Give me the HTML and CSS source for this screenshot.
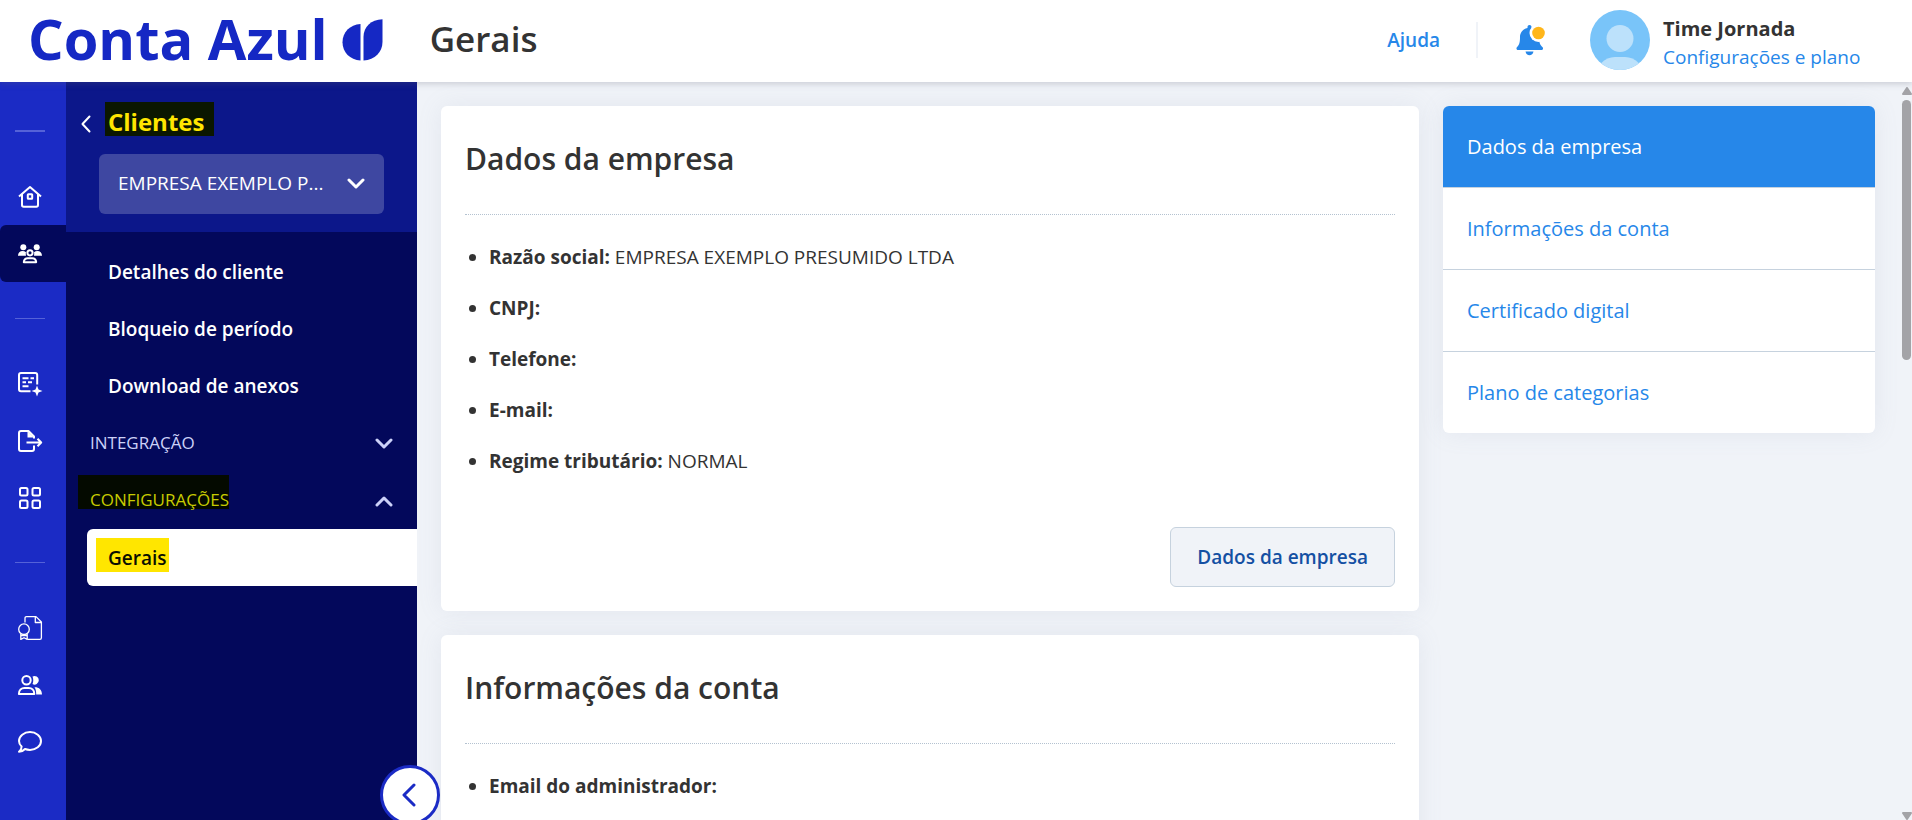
FILE: index.html
```html
<!DOCTYPE html>
<html lang="pt-BR">
  <head>
    <meta charset="utf-8">
    <meta name="viewport" content="width=device-width, initial-scale=1">
    <title>Gerais - Conta Azul</title>
    <link rel="stylesheet" href="styles.css">
  </head>

  <body>
    <header class="topbar">
      <a class="logo" href="#">
        <span class="logo-text">Conta Azul</span>
        <svg class="logo-mark" width="42" height="42" viewBox="0 0 42 42" aria-hidden="true">
          <path d="M18.500 5v36.500C8 41 .5 33 .5 23.200S8 5.500 18.500 5z"/>
          <path d="M21.500 41.500V18C21.500 8 29 .5 40.500.3V23C40.500 33 33 41 21.500 41.500z"/>
        </svg>
      </a>
      <h1 class="page-title">Gerais</h1>
      <div class="topbar-right">
        <a class="help" href="#">Ajuda</a>
        <button class="bell" type="button" aria-label="Notificações">
          <svg width="30" height="32" viewBox="0 0 30 32" aria-hidden="true">
            <path fill="#2687e9" d="M13.500 1c1.200 0 2 .9 2 2v1C20 5 23 8.500 23 13c0 5 .8 7.500 3.600 10.300.9 1 .4 2.700-1.100 2.700H2c-1.500 0-2-1.700-1.100-2.700C3.500 20.500 4 18 4 13c0-4.500 3-8 7.500-9V3c0-1.100.8-2 2-2z"/>
            <path fill="#2687e9" d="M9.500 27.500h8c-.5 2.500-2 3.700-4 3.700s-3.500-1.200-4-3.700z"/>
            <circle cx="22.500" cy="9" r="9" fill="#fff"/>
            <circle cx="22.500" cy="9" r="6.300" fill="#ffb61a"/>
          </svg>
        </button>
        <div class="user">
          <svg class="avatar" width="60" height="60" viewBox="0 0 60 60" aria-hidden="true">
            <circle cx="30" cy="30" r="30" fill="#79c4f9"/>
            <circle cx="30" cy="28.500" r="13.500" fill="#bce1fb"/>
            <path fill="#bce1fb" d="M11 53.200C15 49 20 47 25 47h10c5 0 10 2 14 6.200A30 30 0 0 1 11 53.200z"/>
          </svg>
          <div class="user-text">
            <strong>Time Jornada</strong>
            <a href="#">Configurações e plano</a>
          </div>
        </div>
      </div>
    </header>

    <div class="layout">
      <nav class="rail" aria-label="Principal">
        <hr>
        <a href="#" aria-label="Início">
          <svg viewBox="0 0 24 24"><path d="M1 11.500 12 2l11 9.500M4 9.500V20c0 1 .6 1.700 1.700 1.700h12.600c1.100 0 1.700-.7 1.700-1.700V9.500"/><rect x="9.800" y="9.300" width="4.400" height="4.400" rx=".5"/></svg>
        </a>
        <a class="active" href="#" aria-label="Clientes">
          <svg viewBox="0 0 24 24"><g class="solid"><circle cx="5.300" cy="5.200" r="3"/><circle cx="18.700" cy="5.200" r="3"/><path d="M0 13.800c0-3 2-4.800 4.500-4.800 1.300 0 2.500.4 3.500 1.200-.4 1.200-.3 2.400.1 3.600zM24 13.800c0-3-2-4.800-4.500-4.800-1.300 0-2.500.4-3.500 1.200.4 1.200.3 2.400-.1 3.600z"/></g><circle cx="12" cy="10.800" r="2.600"/><path d="M5.800 20.200c.2-2.600 1.800-4 4-4h4.400c2.200 0 3.800 1.400 4 4z"/></svg>
        </a>
        <hr>
        <a href="#" aria-label="Lançamentos">
          <svg viewBox="0 0 24 24"><path d="M12.500 19.200H3c-1.200 0-2-.8-2-2V3c0-1.200.8-2 2-2h14.200c1.200 0 2 .8 2 2v9.500M4.500 6.200h6M12.500 6.200H16M4.500 10.200H8M10 10.200h4M4.500 14.200h6"/><path class="solid" d="M19 13.500l1.500 4L24.500 19l-4 1.500L19 24.500l-1.500-4-4-1.500 4-1.500z"/></svg>
        </a>
        <a href="#" aria-label="Exportar">
          <svg viewBox="0 0 24 24"><path d="M16 16.500V20c0 1.200-.8 2-2 2H3c-1.200 0-2-.8-2-2V4c0-1.200.8-2 2-2h7.500L16 7.500v2M8.500 13.500H23M19.500 9.800l3.700 3.700-3.700 3.700"/><path class="solid" d="M9.500 2v6.500H16z"/></svg>
        </a>
        <a href="#" aria-label="Aplicativos">
          <svg viewBox="0 0 24 24"><rect x="2" y="2" width="7.500" height="7.500" rx="1.500"/><rect x="14.500" y="2" width="7.500" height="7.500" rx="1.500"/><rect x="2" y="14.500" width="7.500" height="7.500" rx="1.500"/><rect x="14.500" y="14.500" width="7.500" height="7.500" rx="1.500"/></svg>
        </a>
        <hr>
        <a href="#" aria-label="Certificados">
          <svg class="thin" viewBox="0 0 24 24"><path d="M7 6.500V2.200C7 1.200 7.600.6 8.500.6H18l5.400 5.400v15.800c0 1-.6 1.600-1.600 1.600H9.500M17.300.8v5.700h6"/><circle cx="6" cy="13.200" r="5.300"/><path d="M2.800 17.800v5.600L6 21.700l3.200 1.700v-5.600M3 19.500h6"/></svg>
        </a>
        <a href="#" aria-label="Usuários">
          <svg viewBox="0 0 24 24"><g class="solid"><path d="M14.500 3.500a4.300 4.300 0 1 1 0 7.600c1-2.200 1-5.400 0-7.600zM16.500 14.200c4.500-.2 7.500 2.500 7.500 7.300h-5.800c0-3-.3-5.200-1.700-7.300z"/></g><circle cx="8.500" cy="7.200" r="4.200"/><path d="M.9 20.900c0-4 2.600-6 5.600-6h4.200c3 0 5.600 2 5.600 6z"/></svg>
        </a>
        <a href="#" aria-label="Mensagens">
          <svg viewBox="0 0 24 24"><path d="M3.600 16.500C2 15 1 13 1 11c0-5 5-8.900 11-8.900S23 6 23 11s-5 8.900-11 8.900c-1.800 0-3.500-.3-5-.9-1.500 1.700-3.500 2.700-6 2.700 1.800-1.500 2.700-3.300 2.600-5.200z"/></svg>
        </a>
      </nav>

      <aside class="sidebar">
        <div class="sidebar-head">
          <div class="sidebar-title">
            <a href="#" aria-label="Voltar"><svg class="chevron" width="10" height="18" viewBox="0 0 10 18"><path d="M8.500 1.500 1.500 9l7 7.500"/></svg></a>
            <h2><mark class="dark">Clientes</mark></h2>
          </div>
          <div class="company">
            <select aria-label="Empresa">
              <option>EMPRESA EXEMPLO P...</option>
            </select>
            <svg class="chevron bold" width="18" height="12" viewBox="0 0 18 12" aria-hidden="true"><path d="M2 2l7 7 7-7"/></svg>
          </div>
        </div>
        <nav class="menu" aria-label="Clientes">
          <a class="item" href="#">Detalhes do cliente</a>
          <a class="item" href="#">Bloqueio de período</a>
          <a class="item" href="#">Download de anexos</a>
          <button class="group" type="button" aria-expanded="false">
            <span>INTEGRAÇÃO</span>
            <svg class="chevron bold" width="18" height="12" viewBox="0 0 18 12"><path d="M2 2l7 7 7-7"/></svg>
          </button>
          <button class="group" type="button" aria-expanded="true">
            <mark class="dark">CONFIGURAÇÕES</mark>
            <svg class="chevron bold" width="18" height="12" viewBox="0 0 18 12"><path d="M2 10l7-7 7 7"/></svg>
          </button>
          <a class="item current" href="#"><mark>Gerais</mark></a>
        </nav>
        <button class="collapse" type="button" aria-label="Recolher menu">
          <svg class="chevron bold" width="14" height="24" viewBox="0 0 14 24"><path d="M12 2 2 12l10 10"/></svg>
        </button>
      </aside>

      <main class="content">
        <div class="cards">
          <section class="card">
            <h2>Dados da empresa</h2>
            <ul>
              <li><strong>Razão social:</strong> EMPRESA EXEMPLO PRESUMIDO LTDA</li>
              <li><strong>CNPJ:</strong></li>
              <li><strong>Telefone:</strong></li>
              <li><strong>E-mail:</strong></li>
              <li><strong>Regime tributário:</strong> NORMAL</li>
            </ul>
            <div class="card-actions">
              <button class="btn" type="button">Dados da empresa</button>
            </div>
          </section>
          <section class="card">
            <h2>Informações da conta</h2>
            <ul>
              <li><strong>Email do administrador:</strong></li>
            </ul>
          </section>
        </div>
        <nav class="anchors" aria-label="Seções">
          <a class="active" href="#">Dados da empresa</a>
          <a href="#">Informações da conta</a>
          <a href="#">Certificado digital</a>
          <a href="#">Plano de categorias</a>
        </nav>
      </main>

      <div class="scrollbar" aria-hidden="true">
        <svg width="10" height="8" viewBox="0 0 10 8"><path d="M5 1 9 7H1z"/></svg>
        <span class="thumb"></span>
        <svg width="10" height="8" viewBox="0 0 10 8"><path d="M1 1h8L5 7z"/></svg>
      </div>
    </div>
  </body>
</html>
```

FILE: styles.css
```css
* {
  box-sizing: border-box;
}

body {
  margin: 0;
  height: 100vh;
  display: flex;
  flex-direction: column;
  overflow: hidden;
  background: #f0f3f8;
  color: #333;
  font-family: "Open Sans", "Noto Sans", sans-serif;
  font-size: 19px;
  line-height: 27px;
}

a {
  color: #2687e9;
  text-decoration: none;
}

button, select {
  font: inherit;
  border: 0;
  padding: 0;
  margin: 0;
  background: none;
  cursor: pointer;
}

h1, h2 {
  margin: 0;
  font-weight: 600;
}

svg {
  display: block;
  flex: none;
}

/* top bar */
.topbar {
  position: relative;
  z-index: 2;
  flex: none;
  display: flex;
  align-items: center;
  height: 82px;
  padding: 0 46px 2px 28px;
  background: #fff;
  box-shadow: 0 2px 6px rgba(90, 90, 110, .25);
}

.logo {
  display: flex;
  align-items: center;
  gap: 14px;
  color: #1528c4;
}

.logo-text {
  padding-bottom: 4px;
  font-size: 56px;
  line-height: 72px;
  font-weight: 700;
}

.logo-mark {
  fill: #1528c4;
}

.page-title {
  margin-left: 46px;
  padding-bottom: 2px;
  font-size: 35px;
  line-height: 48px;
}

.topbar-right {
  display: flex;
  align-items: center;
  margin-left: auto;
}

.help {
  padding-right: 36px;
  border-right: 2px solid #f0f3f8;
  line-height: 36px;
  font-weight: 600;
}

.bell {
  margin: 0 44px 0 38px;
}

.user {
  display: flex;
  align-items: center;
  gap: 13px;
}

.user-text {
  display: flex;
  flex-direction: column;
  min-width: 203px;
  padding-top: 6px;
  line-height: 29px;
}

.user-text strong {
  font-size: 20px;
}

.layout {
  position: relative;
  flex: 1;
  min-height: 0;
  display: flex;
}

/* icon rail */
.rail {
  flex: none;
  width: 66px;
  padding-top: 12px;
  background: #1b2bc5;
}

.rail hr {
  width: 30px;
  height: 1px;
  margin: 36px 0 36px 15px;
  border: 0;
  background: #5562d8;
}

.rail hr:first-child {
  height: 2px;
}

.rail a {
  display: flex;
  align-items: center;
  height: 57px;
  padding-left: 18px;
  border-radius: 6px 0 0 6px;
}

.rail a.active {
  background: #03085b;
}

.rail svg {
  width: 24px;
  height: 24px;
  fill: none;
  stroke: #fff;
  stroke-width: 2;
  stroke-linejoin: round;
  overflow: visible;
}

.rail svg.thin {
  stroke-width: 1.3;
}

.rail .solid {
  fill: #fff;
  stroke: none;
}

/* sidebar */
.sidebar {
  position: relative;
  z-index: 1;
  flex: none;
  width: 351px;
  background: #03085b;
}

.sidebar-head {
  height: 150px;
  padding: 20px 33px 0 15px;
  background: #0c178a;
}

.sidebar-title {
  display: flex;
  align-items: flex-end;
  gap: 14px;
}

.sidebar-title a {
  padding-bottom: 3px;
}

.sidebar-title h2 {
  font-size: 24px;
  line-height: 34px;
  font-weight: 700;
}

.chevron {
  fill: none;
  stroke: #fff;
  stroke-width: 2;
  stroke-linecap: round;
  stroke-linejoin: round;
}

.chevron.bold {
  stroke-width: 3;
}

/* marker highlights, taller above the text than below it */
mark {
  display: block;
  padding: 6px 2px 0 12px;
  background: #ffe600;
  color: #0a0f00;
  line-height: 28px;
}

mark.dark {
  background: #040a00;
  color: #c8cc00;
}

.sidebar-title mark.dark {
  padding: 6px 10px 0 3px;
  background: #0b1700;
  color: #ffe600;
}

.company {
  display: flex;
  align-items: center;
  margin: 18px 0 0 18px;
  padding-right: 19px;
  height: 60px;
  border-radius: 6px;
  background: #3e47a1;
}

.company select {
  flex: 1;
  min-width: 0;
  height: 60px;
  padding: 0 0 2px 19px;
  appearance: none;
  color: #fff;
}

.menu {
  display: flex;
  flex-direction: column;
  padding-top: 12px;
}

.item {
  display: flex;
  align-items: center;
  height: 57px;
  padding-left: 42px;
  color: #fff;
  font-weight: 600;
}

.item.current {
  align-items: flex-start;
  margin-left: 21px;
  padding: 9px 0 0 9px;
  border-radius: 6px 0 0 6px;
  background: #fff;
}

.group {
  display: flex;
  align-items: center;
  justify-content: space-between;
  height: 57px;
  padding: 0 24px;
  color: #ccd1f8;
  font-size: 17px;
}

.group span {
  padding-bottom: 2px;
}

.group mark {
  align-self: flex-start;
  margin: 3px 0 0 -12px;
  padding: 16px 0 0 12px;
  line-height: 18px;
}

.group .chevron {
  stroke: #ccd1f8;
}

.collapse {
  position: absolute;
  right: -23px;
  bottom: -5px;
  display: flex;
  align-items: center;
  justify-content: center;
  width: 60px;
  height: 60px;
  padding-right: 2px;
  border: 3px solid #1b2bc5;
  border-radius: 50%;
  background: #fff;
}

.collapse .chevron {
  stroke: #1b2bc5;
}

/* content */
.content {
  flex: 1;
  min-width: 0;
  display: flex;
  align-items: flex-start;
  gap: 24px;
  padding: 24px 37px 0 24px;
}

.cards {
  flex: 1;
  display: flex;
  flex-direction: column;
  gap: 24px;
}

.card {
  padding: 24px;
  border-radius: 6px;
  background: #fff;
  box-shadow: 0 0 24px rgba(140, 150, 170, .12);
}

.card h2 {
  padding: 9px 0 35px;
  border-bottom: 1px dotted #b4c2d0;
  font-size: 30px;
  line-height: 40px;
}

.card ul {
  margin: 29px 0 0;
  padding-left: 24px;
}

.card li {
  margin-bottom: 24px;
}

.card-actions {
  display: flex;
  justify-content: flex-end;
  margin-top: 52px;
}

.btn {
  height: 60px;
  padding: 0 26px;
  border: 1px solid #c6d2de;
  border-radius: 6px;
  background: #f0f3f8;
  color: #1450a3;
  font-weight: 600;
}

.anchors {
  flex: none;
  width: 432px;
  border-radius: 6px;
  overflow: hidden;
  background: #fff;
  box-shadow: 0 0 24px rgba(140, 150, 170, .12);
}

.anchors a {
  display: block;
  padding: 27px 24px;
  font-size: 20px;
}

.anchors a + a {
  border-top: 1px solid #c6d2de;
}

.anchors a.active {
  background: #2687e9;
  color: #fff;
}

.scrollbar {
  position: absolute;
  top: 5px;
  right: 0;
  bottom: 0;
  width: 10px;
  display: flex;
  flex-direction: column;
  justify-content: space-between;
  fill: #a3a3a7;
  stroke: #a3a3a7;
  stroke-width: 2;
  stroke-linejoin: round;
}

.thumb {
  height: 260px;
  margin: 5px 1px auto 0;
  border-radius: 5px;
  background: #a3a3a7;
}
```
